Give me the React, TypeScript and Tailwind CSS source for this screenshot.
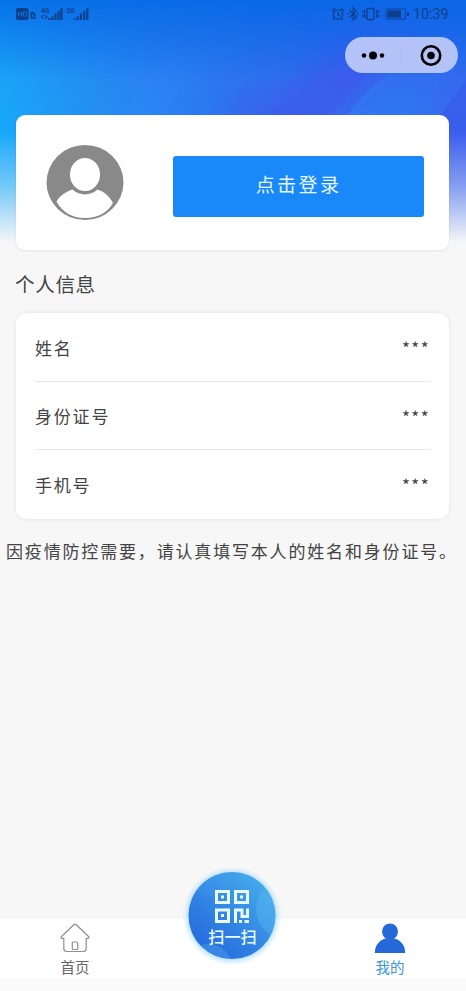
import type { FC } from "react"

interface Field {
  label: string
  value: string
}

const fields: Field[] = [
  { label: "姓名", value: "***" },
  { label: "身份证号", value: "***" },
  { label: "手机号", value: "***" },
]

export default function App() {
  return (
    <div className="flex h-[991px] w-[466px] flex-col overflow-hidden bg-[#f7f7f7] font-['Roboto','Noto_Sans_CJK_SC',sans-serif] text-[#434343]">
      <header className="grid h-[250px] shrink-0">
        <HeaderBackground />
        <div className="z-10 col-start-1 row-start-1 flex flex-col">
          <StatusBar />
          <Capsule />
          <LoginCard />
        </div>
      </header>

      <main className="flex flex-1 flex-col">
        <h2 className="mt-[22px] pl-[15px] text-[19.5px] leading-[28px] tracking-[0.7px]">个人信息</h2>
        <div className="mx-4 mt-[13px] h-[206px] w-[433px] rounded-[10px] bg-white pr-[18px] pl-[19px] shadow-[0_0_4px_rgba(0,0,0,0.09)]">
          {fields.map((field) => (
            <FieldRow key={field.label} {...field} />
          ))}
        </div>
        <p className="mt-[20px] pl-[6px] text-[17px] leading-[26px] tracking-[1.83px] whitespace-nowrap">
          因疫情防控需要，请认真填写本人的姓名和身份证号。
        </p>
      </main>

      <TabBar />
    </div>
  )
}

const HeaderBackground: FC = () => (
  <svg className="col-start-1 row-start-1" width="466" height="250" viewBox="0 0 466 250">
    <defs>
      <linearGradient id="sky" x1="0" y1="125" x2="330" y2="20" gradientUnits="userSpaceOnUse">
        <stop offset="0" stopColor="#18a8f9" />
        <stop offset="0.25" stopColor="#2290f3" />
        <stop offset="0.5" stopColor="#2a7cf0" />
        <stop offset="1" stopColor="#3165ed" />
      </linearGradient>
      <linearGradient id="top" x1="0" y1="0" x2="0" y2="1">
        <stop offset="0" stopColor="#0068e4" stopOpacity="0.8" />
        <stop offset="1" stopColor="#0068e4" stopOpacity="0" />
      </linearGradient>
      <radialGradient id="violet">
        <stop offset="0" stopColor="#4257ec" stopOpacity="0.75" />
        <stop offset="0.5" stopColor="#4257ec" stopOpacity="0.35" />
        <stop offset="1" stopColor="#4257ec" stopOpacity="0" />
      </radialGradient>
      <linearGradient id="ray" x1="0" y1="0" x2="0" y2="1">
        <stop offset="0" stopColor="#2f8cf8" stopOpacity="0" />
        <stop offset="1" stopColor="#2f8cf8" stopOpacity="0.45" />
      </linearGradient>
      <linearGradient id="fade" x1="0" y1="0" x2="0" y2="1">
        <stop offset="0" stopColor="#f7f7f7" stopOpacity="0" />
        <stop offset="0.5" stopColor="#f7f7f7" stopOpacity="0.42" />
        <stop offset="1" stopColor="#f7f7f7" />
      </linearGradient>
    </defs>
    <rect width="466" height="250" fill="url(#sky)" />
    <ellipse cx="285" cy="118" rx="80" ry="45" fill="url(#violet)" />
    <ellipse cx="345" cy="75" rx="100" ry="48" fill="url(#violet)" transform="rotate(-42 345 75)" />
    <path d="M95 115C112 82 125 62 145 40L235 20C190 60 185 80 165 115Z" fill="url(#ray)" opacity="0.5" />
    <path d="M123 115C138 85 150 70 170 50L260 30C215 65 205 85 190 115Z" fill="url(#ray)" opacity="0.4" />
    <path d="M330 115C350 92 368 76 392 60L420 55L348 115Z" fill="url(#ray)" opacity="0.4" />
    <path d="M348 115C365 90 390 70 420 55L466 35V80L440 115Z" fill="url(#ray)" />
    <ellipse cx="480" cy="140" rx="80" ry="90" fill="url(#violet)" />
    <rect width="466" height="80" fill="url(#top)" />
    <rect y="132" width="466" height="111" fill="url(#fade)" />
    <rect y="242" width="466" height="8" fill="#f7f7f7" />
  </svg>
)

const StatusBar: FC = () => (
  <div className="flex h-[27px] items-center justify-between pr-[16px] pl-4 text-[#0c3f8c]">
    <svg width="76" height="16" viewBox="0 0 76 16" fill="currentColor">
      <rect x="0" y="2" width="12.5" height="12" rx="2" />
      <path d="M2.3 5.8v4.4M5.4 5.8v4.4M2.3 8h3.1M7.4 5.8h2c1.8 0 1.8 4.4 0 4.4h-2z" fill="none" stroke="#1678db" strokeWidth="0.9" />
      <path d="M14.5 6h3.2l1.8 1.7V13h-5zM16.2 8v3.5h1.4V8z" fillRule="evenodd" />
      <text x="25" y="7" fontSize="6.5" fontWeight="700" fontFamily="Roboto">4G</text>
      <path d="M27.5 9l-2 1.8l2 1.8M29 9l2 1.8l-2 1.8" fill="none" stroke="currentColor" strokeWidth="1.1" />
      <path d="M32 12h2.2v2H32zM35.2 10.5h2.2V14h-2.2zM38.4 7.5h2.2V14h-2.2zM41.6 5h2.2v9h-2.2zM44.4 2h2.2v12h-2.2z" />
      <text x="50.5" y="7" fontSize="6.5" fontWeight="700" fontFamily="Roboto">2G</text>
      <path d="M57.5 12.5h2.2V14h-2.2zM60.7 10.5h2.2V14h-2.2zM63.9 7.5h2.2V14h-2.2zM67.1 5h2.2v9h-2.2zM70.2 2h2.2v12h-2.2z" />
    </svg>
    <div className="flex items-center">
      <svg width="80" height="16" viewBox="0 0 80 16" fill="none" stroke="currentColor" strokeWidth="1.3">
        {/* alarm */}
        <circle cx="7" cy="8.5" r="4.7" />
        <path d="M7 6v3l2.3 1.2M1 5l3-3M13 5l-3-3M3.5 12.5L2 14M10.5 12.5L12 14" />
        {/* bluetooth */}
        <path d="M18.5 4.5l7 6.5-3.3 3V2l3.3 3-7 6.5M16.5 8H18M26 8h1.5" />
        {/* vibrate */}
        <rect x="36" y="2.5" width="7" height="11" rx="1" />
        <path d="M33.6 4v8M46 4v8" />
        <path d="M31 5.5h2M31 10h2M46.5 5.5h2M46.5 10h2" />
        {/* battery */}
        <rect x="55" y="3" width="19.5" height="10" rx="1" strokeWidth="0.9" />
        <rect x="56.5" y="4.5" width="13.5" height="7" fill="currentColor" stroke="none" />
        <path d="M77 6v4" strokeWidth="1.8" />
      </svg>
      <span className="ml-[2px] w-[37px] text-[14.3px] leading-4 whitespace-nowrap">10:39</span>
    </div>
  </div>
)

const Capsule: FC = () => (
  <div className="mt-[10px] mr-[8px] flex h-[36px] w-[113px] items-center self-end rounded-full bg-[#b4c3f7]">
    <svg width="113" height="36" viewBox="0 0 113 36">
      <circle cx="19" cy="18.5" r="2.2" />
      <circle cx="28" cy="18.5" r="4" />
      <circle cx="37" cy="18.5" r="2.2" />
      <path d="M56.5 8v20" stroke="#aabaf0" strokeWidth="1" />
      <circle cx="86" cy="18.5" r="9.2" fill="none" stroke="black" strokeWidth="2.6" />
      <circle cx="86" cy="18.5" r="3.8" />
    </svg>
  </div>
)

const LoginCard: FC = () => (
  <section className="mt-[42px] ml-4 flex h-[135px] w-[433px] shrink-0 items-start rounded-[9px] bg-white shadow-[0_1px_3px_rgba(0,0,0,0.08)]">
    <svg className="mt-[29px] ml-[30px]" width="78" height="78" viewBox="0 0 78 78">
      <ellipse cx="39" cy="38.5" rx="38.5" ry="37.5" fill="#898989" />
      <ellipse cx="39" cy="30.5" rx="15" ry="16.5" fill="white" />
      <path d="M26.5 45.5C20 47.5 13.5 52 10.5 57.5C16 68 26 74 39 74C52 74 62 68 67 59C64 53 58 47.5 51.5 45.5C44 52 34 52 26.5 45.5Z" fill="white" />
    </svg>
    <button className="mt-[41px] ml-[49px] h-[61px] w-[251px] rounded-[3px] bg-[#1989fa] text-[19px] tracking-[2.4px] text-[#e8f8ff]">
      点击登录
    </button>
  </section>
)

const FieldRow: FC<Field> = ({ label, value }) => (
  <div className="flex h-[68.5px] justify-between border-b border-[#e8e8e8] last:border-b-0">
    <span className="mt-[22.5px] text-[17px] leading-[26px] tracking-[1.8px]">{label}</span>
    <span className="mt-[22px] mr-px font-['Noto_Sans_CJK_SC',sans-serif] text-[17px] leading-[26px] tracking-[1.4px]">{value}</span>
  </div>
)

const TabBar: FC = () => (
  <nav className="flex h-[72px] shrink-0 justify-between border-b-[13px] border-[#fafafa] bg-white">
    <a className="flex w-[150px] flex-col items-center text-[#666666]">
      <svg className="mt-[4px] shrink-0" width="30" height="30" viewBox="0 0 30 30" fill="none" stroke="#8f8f8f" strokeWidth="1.2" strokeLinejoin="round">
        <path d="M14 1.5Q15 .7 16 1.5L28.5 13.5Q29.5 15.2 28 15.3H26.2V25.5Q26.2 28.5 23.2 28.5H6.8Q3.8 28.5 3.8 25.5V15.3H2Q.5 15.2 1.5 13.5Z" />
        <rect x="12.3" y="19" width="5.4" height="7.5" rx="1" />
      </svg>
      <span className="mt-[6px] text-[14.5px] leading-[20px]">首页</span>
    </a>

    <a className="-mt-[53px] h-[102px] w-[102px]">
      <ScanButton />
    </a>

    <a className="flex w-[152px] flex-col items-center text-[#3a93e6]">
      <svg className="mt-[4px] shrink-0" width="32" height="30" viewBox="0 0 32 30" fill="#2569d8">
        <circle cx="16" cy="8.5" r="8" />
        <path d="M.8 30C.8 21 7 15 16 15C25 15 31.2 21 31.2 30Z" />
      </svg>
      <span className="mt-[6px] text-[14.5px] leading-[20px]">我的</span>
    </a>
  </nav>
)

const ScanButton: FC = () => (
  <svg width="102" height="102" viewBox="0 0 102 102">
    <defs>
      <linearGradient id="scan" x1="0.85" y1="0.1" x2="0.2" y2="0.85">
        <stop offset="0" stopColor="#48b0ec" />
        <stop offset="0.5" stopColor="#348ae5" />
        <stop offset="1" stopColor="#2569dc" />
      </linearGradient>
      <radialGradient id="glow">
        <stop offset="0.84" stopColor="#7cc8f8" stopOpacity="0.65" />
        <stop offset="1" stopColor="#b9e6ff" stopOpacity="0" />
      </radialGradient>
      <clipPath id="disc">
        <circle cx="51" cy="49.5" r="43.5" />
      </clipPath>
    </defs>
    <circle cx="51" cy="50" r="50" fill="url(#glow)" />
    <g clipPath="url(#disc)">
      <rect width="102" height="102" fill="url(#scan)" />
      <circle cx="106" cy="43" r="31" fill="#5cb8f0" opacity="0.4" />
      <circle cx="27" cy="103" r="25" fill="#4a9bee" opacity="0.5" />
      <circle cx="30" cy="8" r="22" fill="#4ba2ee" opacity="0.2" />
    </g>
    <g fill="none" stroke="#e8fbff" strokeWidth="3">
      <path d="M35.5 25.5h12v11h-12zM54.5 25.5h12v11h-12zM35.5 44h12v11.5h-12z" />
      <path d="M54.5 57V44H61v6.5h5.5v-8" />
    </g>
    <g fill="#e8fbff">
      <path d="M40 29.5h3v3h-3zM59 29.5h3v3h-3zM40 48h3v3h-3zM58 54h3v3h-3zM63.5 54H68v3h-4.5z" />
    </g>
    <text x="51.5" y="77" fill="#e8fbff" fontSize="16.2" fontWeight="500" textAnchor="middle">扫一扫</text>
  </svg>
)
